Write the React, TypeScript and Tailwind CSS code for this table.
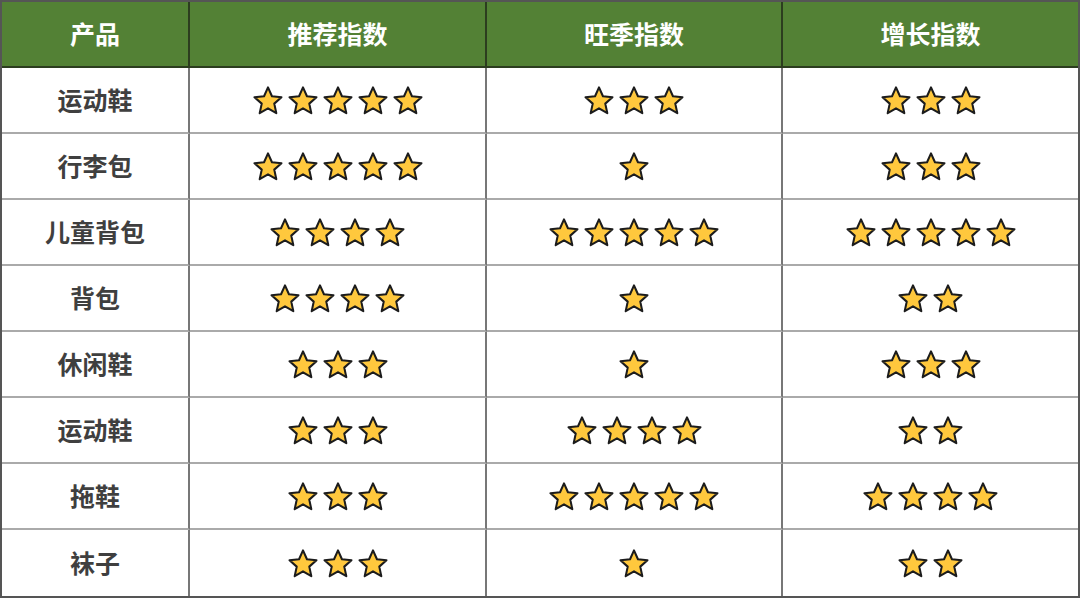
const rows: [string, number, number, number][] = [
  ["运动鞋", 5, 3, 3],
  ["行李包", 5, 1, 3],
  ["儿童背包", 4, 5, 5],
  ["背包", 4, 1, 2],
  ["休闲鞋", 3, 1, 3],
  ["运动鞋", 3, 4, 2],
  ["拖鞋", 3, 5, 4],
  ["袜子", 3, 1, 2],
];

const headers = ["产品", "推荐指数", "旺季指数", "增长指数"];

function Star() {
  return (
    <svg width="30" height="29" viewBox="1 0.4 22 21.2" className="block">
      <polygon
        points="12,1.4 14.9,7.9 21.9,8.6 16.6,13.3 18.1,20.3 12,16.7 5.9,20.3 7.4,13.3 2.1,8.6 9.1,7.9"
        fill="#FFC83D"
        stroke="#1c1c1c"
        strokeWidth="1.5"
        strokeLinejoin="round"
      />
    </svg>
  );
}

function Stars({ n }: { n: number }) {
  return (
    <div className="flex items-center justify-center gap-[5px]">
      {Array.from({ length: n }).map((_, i) => (
        <Star key={i} />
      ))}
    </div>
  );
}

export default function App() {
  return (
    <div
      className="h-[598px] w-[1080px] overflow-hidden bg-white"
      style={{ fontFamily: '"Noto Sans CJK SC", "Noto Sans", sans-serif' }}
    >
      <div className="grid h-full grid-cols-[188px_297px_296px_1fr] grid-rows-9 border-2 border-[#555]">
        {headers.map((h, i) => (
          <div
            key={h}
            className={`flex items-center justify-center border-b-2 border-[#2c3d1f] bg-[#538135] text-[25px] font-bold text-white ${
              i < 3 ? "border-r-2" : ""
            }`}
          >
            {h}
          </div>
        ))}
        {rows.map((r, ri) => (
          <>
            <div
              key={`n${ri}`}
              className={`flex items-center justify-center border-r-2 border-r-[#777] text-[25px] font-bold text-[#3f3f3f] ${
                ri < rows.length - 1 ? "border-b-2 border-b-[#aaa]" : ""
              }`}
            >
              {r[0]}
            </div>
            {[r[1], r[2], r[3]].map((n, ci) => (
              <div
                key={`c${ri}-${ci}`}
                className={`flex items-center justify-center ${ci < 2 ? "border-r-2 border-r-[#777]" : ""} ${
                  ri < rows.length - 1 ? "border-b-2 border-b-[#aaa]" : ""
                }`}
              >
                <Stars n={n} />
              </div>
            ))}
          </>
        ))}
      </div>
    </div>
  );
}
